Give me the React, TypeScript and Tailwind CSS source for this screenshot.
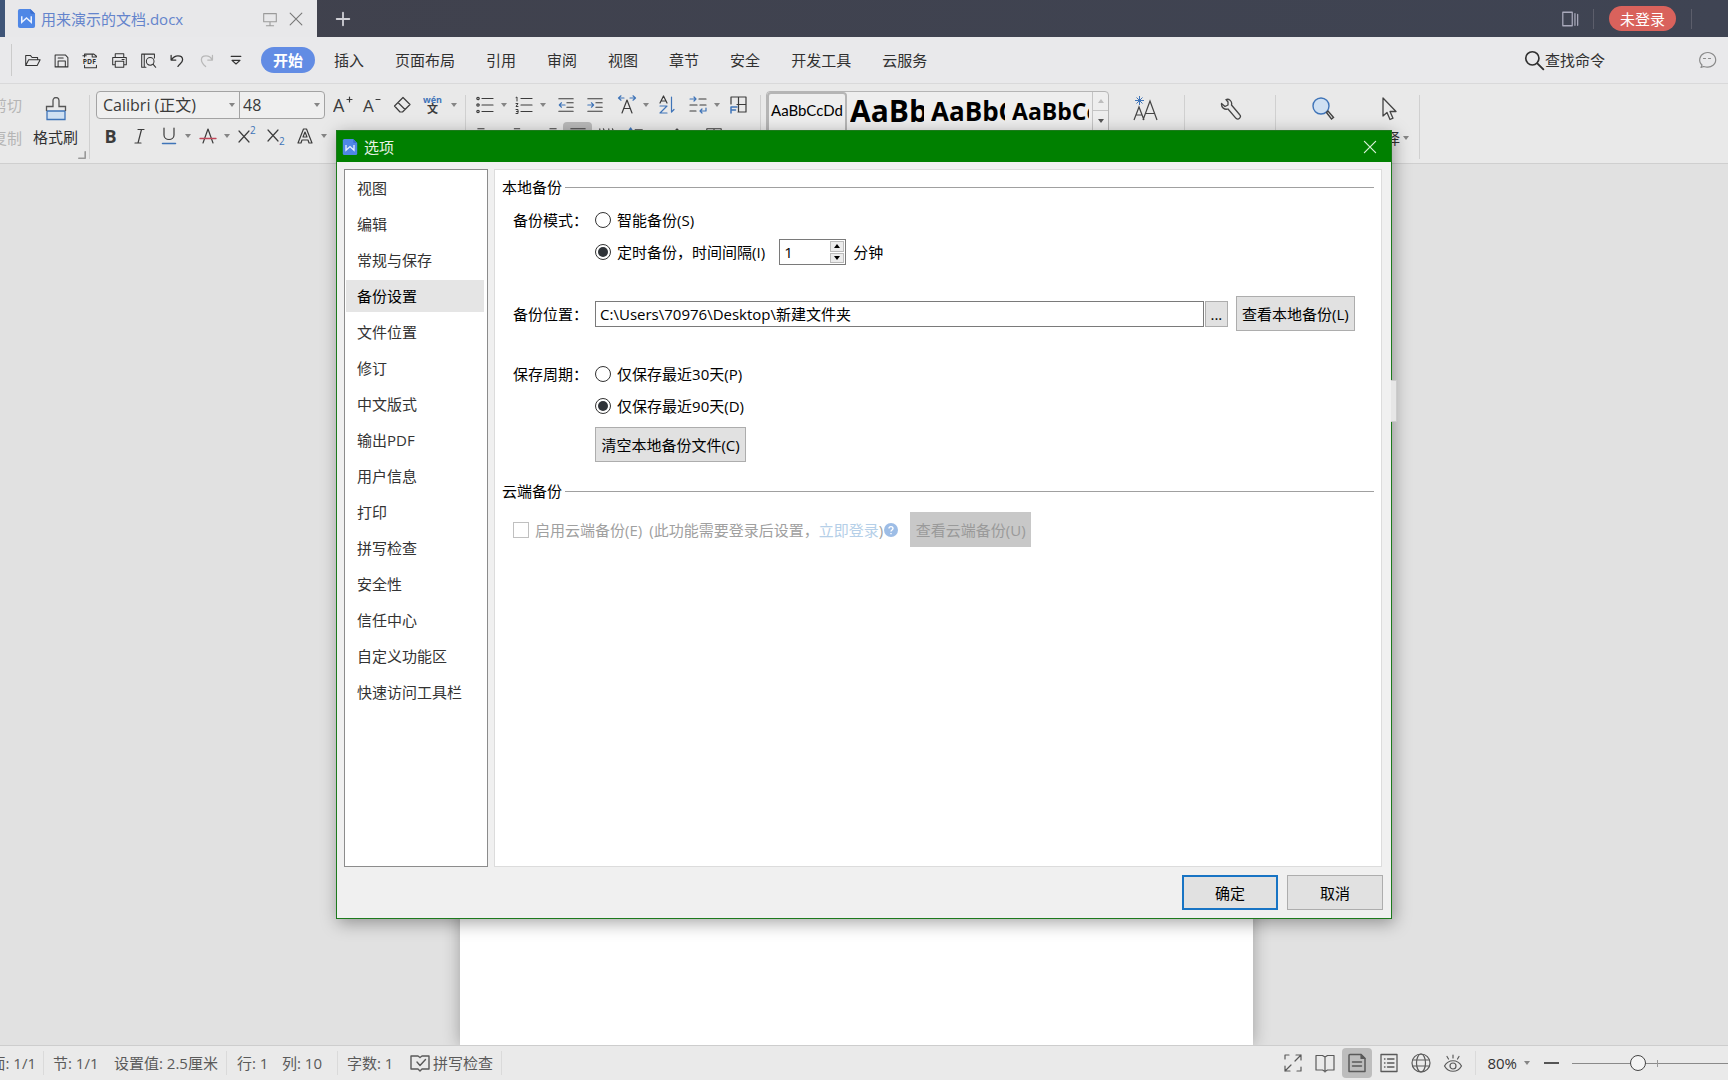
import { ReactNode, useState } from 'react';
import clsx from 'clsx';

const MENUS = ['开始', '插入', '页面布局', '引用', '审阅', '视图', '章节', '安全', '开发工具', '云服务'];

const SECTIONS = [
  '视图', '编辑', '常规与保存', '备份设置', '文件位置', '修订', '中文版式', '输出PDF',
  '用户信息', '打印', '拼写检查', '安全性', '信任中心', '自定义功能区', '快速访问工具栏',
];

const BLUE = '#3f74b8';

function Icon({ children, size = 20, className }: { children: ReactNode; size?: number; className?: string }) {
  return (
    <svg
      width={size}
      height={size}
      viewBox="0 0 20 20"
      fill="none"
      stroke="currentColor"
      strokeWidth="1.2"
      strokeLinecap="round"
      strokeLinejoin="round"
      className={clsx('shrink-0', className)}
      aria-hidden="true"
    >
      {children}
    </svg>
  );
}

function Glyph({ x, y, size, children, fill = 'currentColor', bold }: { x: number; y: number; size: number; children: string; fill?: string; bold?: boolean }) {
  return (
    <text x={x} y={y} fontSize={size} fill={fill} stroke="none" fontWeight={bold ? 700 : 400}>
      {children}
    </text>
  );
}

function Tool({ label, children, className = 'w-[29px]' }: { label: string; children: ReactNode; className?: string }) {
  return (
    <button type="button" aria-label={label} className={clsx('flex h-7 shrink-0 items-center justify-center', className)}>
      {children}
    </button>
  );
}

function Caret({ className = 'fill-[#858585]' }: { className?: string }) {
  return (
    <svg width="6" height="4" viewBox="0 0 6 4" className={clsx('shrink-0', className)} aria-hidden="true">
      <path d="M0 0h6L3 4z" />
    </svg>
  );
}

function More({ label }: { label: string }) {
  return (
    <button type="button" aria-label={label} className="flex h-7 w-[10px] shrink-0 items-center justify-center">
      <Caret />
    </button>
  );
}

function Divider() {
  return <div className="my-1 w-px shrink-0 self-stretch bg-[#d0d0d0]" />;
}

function AppLogo({ size }: { size: number }) {
  return (
    <svg width={size} height={size} viewBox="0 0 18 20" className="shrink-0" aria-hidden="true">
      <path d="M2 0H13l5 5v13a2 2 0 0 1-2 2H2a2 2 0 0 1-2-2V2a2 2 0 0 1 2-2z" fill="#4f87e6" />
      <path d="M13 0l5 5h-4a1 1 0 0 1-1-1z" fill="#3b6fd0" />
      <path d="M4 7.500v6.500l5-4.500 5 4.500V7.500" fill="none" stroke="#eaf1ff" strokeWidth="1.600" />
    </svg>
  );
}

function TitleBar() {
  return (
    <header className="flex h-[37px] shrink-0 bg-gradient-to-r from-[#40414c] to-[#3f4453] text-[#c9cbd6]">
      <div className="w-[5px] bg-[#3f5578]" />
      <div className="flex w-[312px] items-center bg-[#e8e8ea] px-3">
        <AppLogo size={19} />
        <span className="ml-[5px] text-[#6484cc]">用来演示的文档.docx</span>
        <Icon size={18} className="ml-auto text-[#9a9a9a]">
          <path d="M3 4h14v9H3zM10 13v4M6 17.500h8" />
        </Icon>
        <button type="button" aria-label="关闭标签" className="ml-2 text-[#777]">
          <Icon size={18}><path d="M3.500 3.500l13 13M16.500 3.500l-13 13" /></Icon>
        </button>
      </div>
      <button type="button" aria-label="新建标签" className="ml-[17px] text-[#d0d0d6]">
        <Icon size={18}><path d="M10 3v14M3 10h14" strokeWidth="2" /></Icon>
      </button>
      <div className="ml-auto flex items-center pr-9">
        <Icon size={18} className="text-[#a9a9bb]">
          <path d="M2 2.500h10.500v15H2zM15.500 4v13M18.500 5v12" strokeWidth="1.400" />
        </Icon>
        <div className="ml-[14px] h-5 w-px bg-[#5c5e6b]" />
        <button type="button" className="ml-[15px] h-[25px] rounded-full bg-[#d9625c] px-[11px] text-white">未登录</button>
        <div className="ml-[15px] h-5 w-px bg-[#5c5e6b]" />
      </div>
    </header>
  );
}

function MenuBar() {
  return (
    <nav className="flex h-[47px] shrink-0 items-center border-b border-[#d9d9da] bg-[#e9e9eb] text-[#333]">
      <div className="ml-[11px] h-8 w-px bg-[#cbcbcb]" />
      <div className="ml-[6px] flex">
        <Tool label="打开">
          <Icon size={17}><path d="M2 16V4h5.500l2 2.500H16V9M2 16l3.500-7H19l-3.500 7z" /></Icon>
        </Tool>
        <Tool label="保存">
          <Icon size={17}><path d="M2.500 3.500h12l3 3v11h-15zM6 17v-6.500h8.500V17M6 7h6" /></Icon>
        </Tool>
        <Tool label="输出为PDF">
          <Icon size={17}>
            <path d="M3 6V2.500h11L17 5v1M3 15.500v3h14v-3M1 4.500h4M12 2.500V6h5" />
            <Glyph x={1} y={14} size={8} bold>PDF</Glyph>
          </Icon>
        </Tool>
        <Tool label="打印">
          <Icon size={17}><path d="M5 6.500V2h10v4.500M5 15H2V6.500h16V15h-3M5 11h10v7H5zM13 8.700h2.500" /></Icon>
        </Tool>
        <Tool label="打印预览">
          <Icon size={17}><path d="M7 18H2V2.500h15V7M5 2.500V18M15.500 14.500L18.500 18" /><circle cx="12" cy="11" r="4.500" /></Icon>
        </Tool>
        <Tool label="撤销">
          <Icon size={17}><path d="M2.500 4v5.500H8M3 9c2-3 4.500-4.500 7.500-4.500 3.500 0 5.500 2 5.500 4.500 0 4-4 5-5.500 8" strokeWidth="1.500" /></Icon>
        </Tool>
        <Tool label="恢复" className="w-[29px] text-[#b9b9b9]">
          <Icon size={17}><path d="M17 4v5.500h-5.500M16.500 9C15 6 12.500 4.500 9.500 4.500 6 4.500 4 6.500 4 9c0 3 1.500 5 5 8" strokeWidth="1.500" /></Icon>
        </Tool>
        <Tool label="自定义快速访问工具栏">
          <Icon size={16}><path d="M4 5.500h12M5 10.500l5 4.500 5-4.500z" strokeWidth="1.400" /></Icon>
        </Tool>
      </div>
      <div className="ml-[11px] flex gap-[7px]">
        {MENUS.map((name, i) => (
          <button
            key={name}
            type="button"
            className={clsx('h-[26px] rounded-full px-3 whitespace-nowrap', i === 0 ? 'bg-[#628ce4] font-bold text-white' : 'text-[#303030]')}
          >
            {name}
          </button>
        ))}
      </div>
      <button type="button" className="ml-auto flex items-center whitespace-nowrap text-[#303030]">
        <Icon size={22}><circle cx="8.500" cy="8.500" r="6" strokeWidth="1.500" /><path d="M13 13l5.500 5.500" strokeWidth="1.700" /></Icon>
        查找命令
      </button>
      <button type="button" aria-label="反馈" className="mr-[11px] ml-[92px] text-[#8a8a8a]">
        <Icon size={20}><path d="M4 17.500l1-2.500A8 7.300 0 1 1 9 17a9 9 0 0 1-2.500-.500z" /><path d="M6.500 8.500h2M11.500 8.500h2" /></Icon>
      </button>
    </nav>
  );
}

function FontGroup() {
  return (
    <div className="ml-[6px] flex shrink-0 flex-col gap-[3px]">
      <div className="flex items-center">
        <div className="flex h-7 w-[229px] rounded border border-[#a3a3a3] bg-[#efefef] text-[#3a3a3a]">
          <div className="relative w-[143px] border-r border-[#a3a3a3]">
            <select aria-label="字体" className="h-full w-full appearance-none pl-[6px] text-base">
              <option>Calibri (正文)</option>
            </select>
            <Caret className="pointer-events-none absolute top-[11px] right-1 fill-[#858585]" />
          </div>
          <div className="relative flex-1">
            <select aria-label="字号" className="h-full w-full appearance-none pl-[3px] text-base">
              <option>48</option>
            </select>
            <Caret className="pointer-events-none absolute top-[11px] right-1 fill-[#858585]" />
          </div>
        </div>
        <Tool label="增大字号" className="ml-[3px] w-[29px]">
          <Icon><Glyph x={0} y={17} size={18}>A</Glyph><path d="M14 4.500h5M16.500 2v5" /></Icon>
        </Tool>
        <Tool label="减小字号" className="w-[30px]">
          <Icon><Glyph x={1} y={17} size={17}>A</Glyph><path d="M14 4.500h4" /></Icon>
        </Tool>
        <Tool label="清除格式" className="w-[30px]">
          <Icon><path d="M2.500 11L11 2.500l7 7-7.500 7.500H8zM6 7.500l7 7" /></Icon>
        </Tool>
        <Tool label="拼音指南" className="w-8">
          <Icon><Glyph x={0} y={8} size={9} fill={BLUE} bold>wén</Glyph><Glyph x={4} y={18} size={11} bold>文</Glyph></Icon>
        </Tool>
        <More label="拼音指南选项" />
      </div>
      <div className="flex">
        <Tool label="加粗"><span className="text-lg font-bold">B</span></Tool>
        <Tool label="倾斜"><Icon><path d="M8 3.500h6M5 17h6M11.500 3.500L8 17" /></Icon></Tool>
        <Tool label="下划线">
          <Icon><path d="M5 2v7c0 6 10 6 10 0V2" /><path d="M3.500 17.500h13" stroke={BLUE} strokeWidth="1.500" /></Icon>
        </Tool>
        <More label="下划线选项" />
        <Tool label="删除线">
          <Icon><path d="M5 17L10 3l5 14" /><path d="M2 12.500h16" stroke="#c0475a" strokeWidth="1.300" /></Icon>
        </Tool>
        <More label="删除线选项" />
        <Tool label="上标">
          <Icon><path d="M2 5l10 11M12 5L2 16" /><Glyph x={13} y={8} size={10} fill={BLUE}>2</Glyph></Icon>
        </Tool>
        <Tool label="下标">
          <Icon><path d="M2 4l10 11M12 4L2 15" /><Glyph x={13} y={19} size={10} fill={BLUE}>2</Glyph></Icon>
        </Tool>
        <Tool label="文字效果">
          <Icon><path d="M3 17L8.500 3h3L17 17h-3l-1-3H7l-1 3zM8 11h4l-2-5z" /></Icon>
        </Tool>
        <More label="文字效果选项" />
      </div>
    </div>
  );
}

function ParagraphGroup() {
  return (
    <div className="ml-1 flex shrink-0 flex-col gap-[3px]">
      <div className="flex">
        <Tool label="项目符号">
          <Icon><path d="M7 3.500h11M7 10h11M7 16.500h11" /><circle cx="3" cy="3.500" r="1.200" /><circle cx="3" cy="10" r="1.200" /><circle cx="3" cy="16.500" r="1.200" /></Icon>
        </Tool>
        <More label="项目符号选项" />
        <Tool label="编号">
          <Icon>
            <path d="M7 3.500h11M7 10h11M7 16.500h11" />
            <path d="M2 2.500L3 2v4M2 8.500h2L2 11.500h2M2 14.500h2v4H2M2.500 16.500H4" strokeWidth="1" />
          </Icon>
        </Tool>
        <More label="编号选项" />
        <div className="flex px-[3px]">
          <Tool label="减少缩进">
            <Icon size={18}><path d="M2 3h16M11 7.500h7M11 12.500h7M2 17h16" /><path d="M9 10H2.500M5 7.500L2.500 10 5 12.500" stroke={BLUE} /></Icon>
          </Tool>
          <Tool label="增加缩进">
            <Icon size={18}><path d="M2 3h16M11 7.500h7M11 12.500h7M2 17h16" /><path d="M2 10h6.500M6 7.500L8.500 10 6 12.500" stroke={BLUE} /></Icon>
          </Tool>
        </div>
        <Tool label="字符缩放">
          <Icon><path d="M5 18l5-13 5 13M6.500 13.500h7" /><path d="M7 3H1.500M4 .800L1.500 3 4 5.200M13 3h5.500M16 .800L18.500 3 16 5.200" stroke={BLUE} /></Icon>
        </Tool>
        <More label="字符缩放选项" />
        <div className="flex pr-[3px]">
          <Tool label="排序">
            <Icon><path d="M4 8l3.500-7L11 8M5 6h5" /><path d="M4 11h7l-7 7h7" stroke={BLUE} /><path d="M15.500 2v15M18 14.500L15.500 17" stroke={BLUE} /></Icon>
          </Tool>
        </div>
        <Tool label="换行">
          <Icon><path d="M11 4h7M2 10h7M12 10h6M2 16h6" /><path d="M2 4h6M6 2l2 2-2 2M18 13v3h-6M14 14l-2 2 2 2" stroke={BLUE} /></Icon>
        </Tool>
        <More label="换行选项" />
        <Tool label="插入表格" className="w-8">
          <Icon><path d="M3 9V2h15v15h-8M10.500 2v15M9 9.500h9" /><path d="M3 18v-6h6M3 15h4.500" stroke={BLUE} strokeWidth="1.500" /></Icon>
        </Tool>
      </div>
      <div className="flex">
        <Tool label="左对齐"><Icon size={18}><path d="M2 2h7M2 7h14M2 12h9M2 17h14" /></Icon></Tool>
        <Tool label="居中" className="ml-[3px] w-[29px]"><Icon size={18}><path d="M7 2h6M2 7h16M6 12h8M2 17h16" /></Icon></Tool>
        <Tool label="右对齐" className="ml-[3px] w-[29px]"><Icon size={18}><path d="M11 2h7M2 7h16M9 12h9M2 17h16" /></Icon></Tool>
        <Tool label="两端对齐" className="w-[29px] rounded bg-[#b9b9b9]"><Icon size={18}><path d="M2 2h16M2 7h16M2 12h16M2 17h16" /></Icon></Tool>
        <Tool label="分散对齐"><Icon size={18}><path d="M2 2v4M6 2l2 4M12 2v4M16 2l2 4" /></Icon></Tool>
        <Tool label="行距"><Icon size={18}><path d="M9 3h8M9 10h8M9 17h8" /><path d="M4 2v15M2 4l2-3 2 3" stroke={BLUE} /></Icon></Tool>
        <Tool label="底纹" className="ml-3 w-[29px]"><Icon size={18}><path d="M3 9l7-7 7 7-6 6z" /></Icon></Tool>
        <Tool label="边框" className="ml-2 w-[29px]"><Icon size={18}><path d="M2 2h16v16H2zM10 2v16M2 10h16" /></Icon></Tool>
      </div>
    </div>
  );
}

function StyleGallery() {
  return (
    <div className="ml-[5px] flex h-14 shrink-0 rounded border border-[#b5b5b5] bg-[#eeeeee] text-black">
      <button type="button" className="w-20 rounded-sm border-2 border-[#b5b5b5] pb-[22px] font-[Lato,sans-serif] text-[15px] leading-8">AaBbCcDd</button>
      <button type="button" className="w-[81px] pr-1 pb-4 pl-[3px]">
        <span className="block overflow-hidden text-left text-[30px] leading-9 font-bold">AaBb</span>
      </button>
      <button type="button" className="w-[81px] pr-1 pb-4 pl-[3px]">
        <span className="block overflow-hidden text-left text-[26px] leading-9 font-bold">AaBbC</span>
      </button>
      <button type="button" className="w-[81px] pr-px pb-4 pl-[3px]">
        <span className="block overflow-hidden text-left text-[23px] leading-9 font-bold">AaBbCc</span>
      </button>
      <div className="ml-[2px] flex w-4 flex-col border-l border-[#c4c4c4]">
        <button type="button" aria-label="上一行样式" className="flex h-[19px] items-center justify-center border-b border-[#c4c4c4]"><Caret className="rotate-180 fill-[#bdbdbd]" /></button>
        <button type="button" aria-label="下一行样式" className="flex h-[19px] items-center justify-center"><Caret className="fill-[#555]" /></button>
      </div>
    </div>
  );
}

function Ribbon() {
  return (
    <div className="flex h-[80px] shrink-0 overflow-hidden border-b border-[#cfcfcf] bg-[#e9e9e9] pt-[7px] text-[#3c3c3c]">
      <div className="flex w-[22px] shrink-0 flex-col items-end gap-[3px] text-[#b5b5b5]">
        <button type="button" className="flex h-7 items-center whitespace-nowrap">剪切</button>
        <button type="button" className="flex h-8 items-center whitespace-nowrap">复制</button>
      </div>
      <button type="button" className="ml-[11px] flex flex-col items-center gap-1 pt-[6px] whitespace-nowrap text-[#303030]">
        <svg width="24" height="24" viewBox="0 0 24 24" fill="none" strokeWidth="1.300" aria-hidden="true">
          <path d="M3 14h18v8.500H3z" fill="#cfe0f2" stroke={BLUE} />
          <path d="M2.500 14V9.500H9V3.500a3 3 0 0 1 6 0v6h6.500V14" stroke="#555" />
        </svg>
        <span className="leading-6">格式刷</span>
      </button>
      <Icon size={8} className="mt-[60px]"><path d="M18 2v16H2" strokeWidth="4" stroke="#999" /></Icon>
      <div className="ml-[3px] flex"><Divider /></div>
      <FontGroup />
      <div className="ml-[6px] flex"><Divider /></div>
      <ParagraphGroup />
      <div className="ml-[6px] flex"><Divider /></div>
      <StyleGallery />
      <Tool label="文字工具" className="mt-1 ml-[22px] w-[29px]">
        <svg width="26" height="26" viewBox="0 0 26 26" fill="none" stroke="#444" strokeWidth="1.200" aria-hidden="true">
          <path d="M1 24l5-13 5 13M3 19h6M10 24l7-19 7 19M12.500 17.500h9" />
          <path d="M6.500 0v9M2 4.500h9M3.500 1.500l6 6M9.500 1.500l-6 6" stroke={BLUE} strokeWidth="1" />
        </svg>
      </Tool>
      <div className="ml-6 flex"><Divider /></div>
      <Tool label="工具" className="mt-1 ml-[30px] w-[29px]">
        <svg width="24" height="24" viewBox="0 0 24 24" fill="none" stroke="#444" strokeWidth="1.300" strokeLinejoin="round" aria-hidden="true">
          <path d="M8 2.500c3-1 6.500 1.500 5.500 5.500l8 9.500a2.500 2.500 0 0 1-3.500 3.800L10 12c-3.500 1-7-1.500-6.500-5.500l3.500 3 3-1.500V5z" />
        </svg>
      </Tool>
      <div className="ml-[31px] flex"><Divider /></div>
      <Tool label="查找替换" className="mt-1 ml-8 w-[29px]">
        <svg width="24" height="24" viewBox="0 0 24 24" fill="none" strokeWidth="1.400" aria-hidden="true">
          <circle cx="10" cy="9" r="8" fill="#cfe0f2" stroke={BLUE} />
          <path d="M15.500 15.500l5 6.500 2-1.500-5.500-6.500z" stroke="#444" />
        </svg>
      </Tool>
      <button type="button" className="mt-1 ml-[31px] flex w-[41px] flex-col items-end gap-[3px] whitespace-nowrap text-[#303030]">
        <svg width="20" height="28" viewBox="0 0 20 28" fill="none" stroke="#444" strokeWidth="1.300" strokeLinejoin="round" className="mr-[10px]" aria-hidden="true">
          <path d="M4 3v18l4-3.500 3 7 3-1.300-3-6.700h6z" />
        </svg>
        <span className="flex items-center gap-[3px] leading-6">选择<Caret /></span>
      </button>
      <div className="ml-[10px] flex"><Divider /></div>
    </div>
  );
}

function GroupTitle({ children }: { children: string }) {
  return (
    <div className="flex items-center gap-[3px]">
      <h2 className="leading-[22px] whitespace-nowrap">{children}</h2>
      <div className="h-px flex-1 bg-[#a0a0a0]" />
    </div>
  );
}

function Radio({ name, label, checked, onChange }: { name: string; label: string; checked: boolean; onChange: () => void }) {
  return (
    <label className="flex items-center gap-[6px] whitespace-nowrap">
      <input
        type="radio"
        name={name}
        checked={checked}
        onChange={onChange}
        className="size-4 appearance-none rounded-full border border-[#333] bg-clip-content p-[2px] checked:bg-[#2f3338]"
      />
      {label}
    </label>
  );
}

const BUTTON = 'border border-[#adadad] bg-[#e1e1e1] whitespace-nowrap';

function BackupSettings() {
  const [mode, setMode] = useState('timed');
  const [keep, setKeep] = useState('90');
  const [minutes, setMinutes] = useState(1);
  const [path, setPath] = useState('C:\\Users\\70976\\Desktop\\新建文件夹');

  return (
    <section className="min-w-0 flex-1 border border-[#dcdcdc] bg-white px-[7px] pt-[6px] text-black">
      <GroupTitle>本地备份</GroupTitle>
      <div className="flex pt-[6px] pl-[11px]">
        <span className="w-[82px] leading-8">备份模式：</span>
        <div>
          <div className="flex h-8 items-center">
            <Radio name="mode" label="智能备份(S)" checked={mode === 'smart'} onChange={() => setMode('smart')} />
          </div>
          <div className="flex h-8 items-center">
            <Radio name="mode" label="定时备份，时间间隔(I)" checked={mode === 'timed'} onChange={() => setMode('timed')} />
            <div className="ml-[14px] flex h-[26px] w-[67px] border border-[#7a7a7a] p-px">
              <input
                id="minutes"
                type="number"
                value={minutes}
                onChange={e => setMinutes(Number(e.target.value))}
                className="w-0 flex-1 pl-[3px] [appearance:textfield] [&::-webkit-inner-spin-button]:appearance-none"
              />
              <div className="flex w-[14px] flex-col gap-px">
                <button type="button" aria-label="增加" onClick={() => setMinutes(m => m + 1)} className="flex flex-1 items-center justify-center border border-[#bbb] bg-[#ececec]">
                  <Caret className="rotate-180 fill-black" />
                </button>
                <button type="button" aria-label="减少" onClick={() => setMinutes(m => Math.max(1, m - 1))} className="flex flex-1 items-center justify-center border border-[#bbb] bg-[#ececec]">
                  <Caret className="fill-black" />
                </button>
              </div>
            </div>
            <label htmlFor="minutes" className="ml-[7px]">分钟</label>
          </div>
        </div>
      </div>

      <div className="mt-7 flex items-center pr-[19px] pl-[11px]">
        <label htmlFor="path" className="w-[82px] shrink-0">备份位置：</label>
        <input id="path" value={path} onChange={e => setPath(e.target.value)} className="h-[26px] min-w-0 flex-1 border border-[#7a7a7a] px-1" />
        <button type="button" className={clsx(BUTTON, 'ml-px h-[26px] w-[23px]')}>...</button>
        <button type="button" className={clsx(BUTTON, 'ml-2 h-[35px] w-[119px]')}>查看本地备份(L)</button>
      </div>

      <div className="mt-[27px] flex pl-[11px]">
        <span className="w-[82px] leading-8">保存周期：</span>
        <div>
          <div className="flex h-8 items-center">
            <Radio name="keep" label="仅保存最近30天(P)" checked={keep === '30'} onChange={() => setKeep('30')} />
          </div>
          <div className="flex h-8 items-center">
            <Radio name="keep" label="仅保存最近90天(D)" checked={keep === '90'} onChange={() => setKeep('90')} />
          </div>
          <button type="button" className={clsx(BUTTON, 'mt-[5px] h-[35px] w-[151px]')}>清空本地备份文件(C)</button>
        </div>
      </div>

      <div className="mt-[18px]"><GroupTitle>云端备份</GroupTitle></div>
      <div className="mt-[10px] flex items-center pl-[11px] text-[#a0a0a0]">
        <label className="flex items-center gap-[6px] whitespace-nowrap">
          <input type="checkbox" disabled className="size-4 appearance-none border border-[#c0c0c0] bg-white" />
          启用云端备份(E)
        </label>
        <span className="ml-[7px] whitespace-nowrap">(此功能需要登录后设置，<a href="#login" className="text-[#b5cfe8]">立即登录</a>)</span>
        <svg width="14" height="14" viewBox="0 0 14 14" className="ml-px shrink-0" aria-hidden="true">
          <circle cx="7" cy="7" r="7" fill="#9dbde6" />
          <path d="M5 5.500c0-2.500 4-2.500 4 0C9 7 7 7 7 8.500M7 10v1.300" fill="none" stroke="#fff" strokeWidth="1.400" />
        </svg>
        <button type="button" disabled className="ml-3 h-[35px] w-[121px] bg-[#c8c8c8] whitespace-nowrap text-[#9a9a9a]">查看云端备份(U)</button>
      </div>
    </section>
  );
}

function OptionsDialog() {
  const [active, setActive] = useState('备份设置');

  return (
    <div
      role="dialog"
      aria-label="选项"
      className="absolute inset-x-0 top-[130px] mx-auto flex h-[73.1%] w-[61.1%] min-w-[900px] flex-col border border-[#1c7a1c] bg-[#f0f0f0] shadow-[2px_4px_16px_rgba(0,0,0,0.35)]"
    >
      {/* edge of the collapsed side panel */}
      <div className="absolute top-[249px] left-full h-[42px] w-[6px] border border-l-0 border-[#cccccc] bg-[#e6e6e6]" />
      <div className="flex h-[31px] shrink-0 items-center bg-[#008000] pr-[13px] pl-[5px] text-[#e6f2e6]">
        <AppLogo size={16} />
        <h1 className="ml-[6px]">选项</h1>
        <button type="button" aria-label="关闭" className="ml-auto text-[#d8f0d8]">
          <Icon size={16}><path d="M3 3l14 14M17 3L3 17" strokeWidth="1.500" /></Icon>
        </button>
      </div>
      <div className="flex min-h-0 flex-1 gap-[6px] pt-[7px] pr-[9px] pl-[7px]">
        <ul className="w-36 shrink-0 border border-[#8c8c8c] bg-white pr-[3px] pl-px text-[#333]">
          {SECTIONS.map(name => (
            <li key={name} className="h-9 py-[2px]">
              <button
                type="button"
                onClick={() => setActive(name)}
                className={clsx('h-8 w-full pl-[11px] text-left whitespace-nowrap', name === active && 'bg-[#e5e5e5] text-black')}
              >
                {name}
              </button>
            </li>
          ))}
        </ul>
        <BackupSettings />
      </div>
      <div className="flex shrink-0 justify-end gap-[9px] py-2 pr-2">
        <button type="button" className="h-[35px] w-24 border-2 border-[#1874c4] bg-[#e1e1e1] text-black">确定</button>
        <button type="button" className={clsx(BUTTON, 'h-[35px] w-24 text-black')}>取消</button>
      </div>
    </div>
  );
}

function StatusDivider({ className }: { className?: string }) {
  return <div className={clsx('h-6 w-px shrink-0 bg-[#dadada]', className)} />;
}

function ViewButton({ label, active, children }: { label: string; active?: boolean; children: ReactNode }) {
  return (
    <button type="button" aria-label={label} className={clsx('flex h-[30px] w-[30px] items-center justify-center rounded', active && 'bg-[#bdbdbd]')}>
      <Icon size={20}>{children}</Icon>
    </button>
  );
}

function StatusBar() {
  const [zoom, setZoom] = useState(80);

  return (
    <footer className="flex h-[35px] shrink-0 items-center border-t border-[#cdcdcd] bg-[#eaeaea] whitespace-nowrap text-[#5a5a5a]">
      <div className="flex w-9 shrink-0 justify-end overflow-hidden">页面: 1/1</div>
      <StatusDivider className="ml-[7px]" />
      <span className="ml-[9px] w-[61px]">节: 1/1</span>
      <span className="w-28">设置值: 2.5厘米</span>
      <StatusDivider />
      <span className="ml-[10px] w-[45px]">行: 1</span>
      <span className="w-[55px]">列: 10</span>
      <StatusDivider />
      <span className="ml-[9px] w-[63px]">字数: 1</span>
      <button type="button" className="flex items-center gap-[3px]">
        <Icon size={20}>
          <path d="M10 4.500L8 3H1v13h7l2 2 2-2h7V7M10 4.500L12 3h7v4M7 9l3 3.500 5.500-6" strokeWidth="1.400" />
        </Icon>
        拼写检查
      </button>
      <StatusDivider className="ml-2" />
      <div className="ml-auto flex items-center gap-[2px]">
        <ViewButton label="全屏">
          <path d="M2 6V2h4M18 14v4h-4M12 8l6-6M13 2h5v5M8 12l-6 6M2 13v5h5" />
        </ViewButton>
        <ViewButton label="阅读版式"><path d="M1 2.500h6.500L10 4l2.500-1.500H19V17h-6.500L10 18.500 7.500 17H1zM10 4v15" /></ViewButton>
        <ViewButton label="页面视图" active>
          <path d="M3 1.500h11l4 4v13H2V2.500a1 1 0 0 1 1-1zM5.500 9h9M5.500 13h9" strokeWidth="1.500" />
          <path d="M14 1.500v4h4z" fill="currentColor" />
        </ViewButton>
        <ViewButton label="大纲"><path d="M2 1.500h16v17H2zM8.500 6H15M8.500 10H15M8.500 14H15M5.500 6h.500M5.500 10h.500M5.500 14h.500" strokeWidth="1.300" /></ViewButton>
        <ViewButton label="Web版式">
          <circle cx="10" cy="10" r="9" />
          <ellipse cx="10" cy="10" rx="4.500" ry="9" />
          <path d="M1.500 7h17M1.500 13h17" />
        </ViewButton>
        <ViewButton label="护眼模式">
          <path d="M1.500 13c4-7 13-7 17 0-4 7-13 7-17 0zM10 2v3M4 3.500L5.500 6M16 3.500L14.500 6" />
          <circle cx="10" cy="13" r="3" />
        </ViewButton>
      </div>
      <StatusDivider className="ml-[7px]" />
      <button type="button" className="ml-[11px] flex items-center gap-[7px] text-[#333]">80%<Caret /></button>
      <button type="button" aria-label="缩小" onClick={() => setZoom(z => z - 10)} className="ml-[14px] flex h-5 w-[15px] items-center">
        <span className="h-[2px] w-full bg-[#555]" />
      </button>
      <div className="relative ml-[13px] flex h-5 w-[156px] items-center overflow-hidden">
        <div className="absolute left-[85px] h-[7px] w-px bg-[#999]" />
        <input
          type="range"
          aria-label="显示比例"
          min={10}
          max={180}
          value={zoom}
          onChange={e => setZoom(Number(e.target.value))}
          className="h-5 w-full appearance-none bg-transparent [&::-webkit-slider-runnable-track]:h-px [&::-webkit-slider-runnable-track]:bg-[#8a8a8a] [&::-webkit-slider-thumb]:-mt-[8px] [&::-webkit-slider-thumb]:size-4 [&::-webkit-slider-thumb]:appearance-none [&::-webkit-slider-thumb]:rounded-full [&::-webkit-slider-thumb]:border-[1px] [&::-webkit-slider-thumb]:border-[#444] [&::-webkit-slider-thumb]:bg-[#f4f4f4]"
        />
      </div>
    </footer>
  );
}

export default function App() {
  return (
    <div className="relative flex h-screen flex-col overflow-hidden bg-[#e1e1e1] font-['Open_Sans','Noto_Sans_CJK_SC',sans-serif] text-[15px] leading-5">
      <TitleBar />
      <MenuBar />
      <Ribbon />
      <main className="flex min-h-0 flex-1 justify-center pr-[15px]">
        <div className="w-[46.3%] bg-white shadow-[0_0_16px_rgba(0,0,0,0.3)]" />
      </main>
      <StatusBar />
      <OptionsDialog />
    </div>
  );
}
